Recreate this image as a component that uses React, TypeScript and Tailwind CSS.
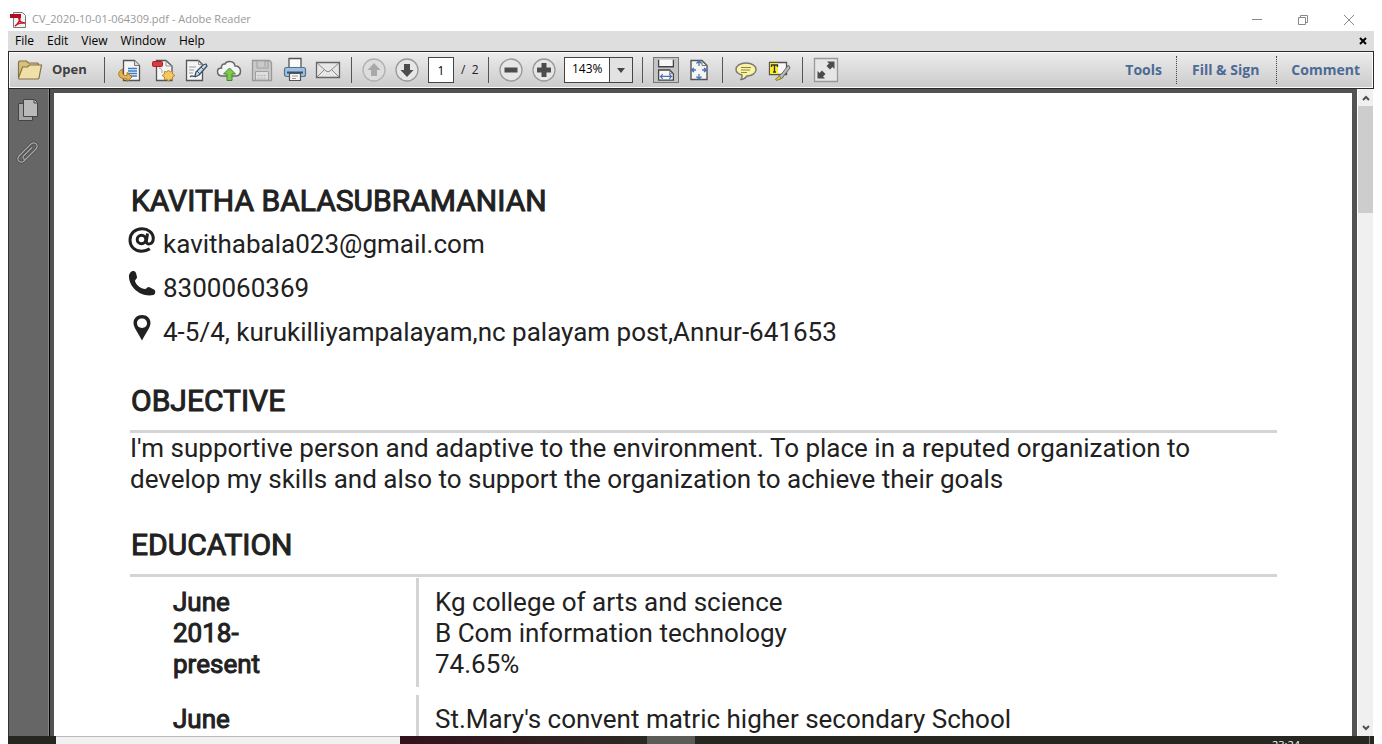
import type { ReactNode } from "react";

const menus = ["File", "Edit", "View", "Window", "Help"];

const education = [
  { period: "June 2018- present", lines: ["Kg college of arts and science", "B Com information technology", "74.65%"] },
  { period: "June", lines: ["St.Mary's convent matric higher secondary School"] },
];

const fold = "M6.5 3.5h11l5 5v15h-16z";

function ToolButton({ label, disabled, children }: { label: string; disabled?: boolean; children: ReactNode }) {
  return (
    <button type="button" aria-label={label} disabled={disabled} className="flex h-8 w-[33px] shrink-0 items-center justify-center">
      <svg viewBox="0 0 26 26" className="size-[26px]" fill="none">
        {children}
      </svg>
    </button>
  );
}

function Separator() {
  return <div className="h-[26px] w-px shrink-0 bg-[#555]" />;
}

function PageShape({ d = fold }: { d?: string }) {
  return (
    <>
      <path d={d} fill="#f5f5f5" stroke="#555" strokeWidth="1.3" />
      <path d="M17.5 3.5v5h5" fill="#ddd" stroke="#777" />
    </>
  );
}

function Toolbar() {
  return (
    <div className="flex h-[38px] shrink-0 items-center border border-[#2a2a2a] bg-linear-to-b from-[#ececec] to-[#cbcbcb] shadow-[inset_0_0_0_1px_#fafafa]">
      <button type="button" className="flex w-[95px] shrink-0 items-center gap-[9px] pl-2 text-[13px] font-bold text-[#404040]">
        <svg viewBox="0 0 26 26" className="size-[26px]" fill="none">
          <path d="M1.500 20.500V5l1-1h7l2 2h9l1 1v3" fill="#d9c079" stroke="#82734a" strokeWidth="1.2" />
          <path d="M1.500 21l4-11h5l2-2h12L22 21l-1 1H2z" fill="#f1dfa8" stroke="#82734a" strokeWidth="1.2" />
        </svg>
        Open
      </button>
      <Separator />
      <div className="flex pr-[7px] pl-2">
        <ToolButton label="Open from Acrobat.com">
          <PageShape />
          <path d="M11 11.500h9M11 14h9M11 16.500h9M13 19h7" stroke="#3e7cc4" strokeWidth="1.3" />
          <path d="M6 12C3 13 1 15.500 2 18.500c.8 2.500 4 3.500 8 3.300V24.500l5-4.500-5-4.500v3c-3.500.3-6-1.500-4-6.500z" fill="#eab546" stroke="#a8742a" />
        </ToolButton>
        <ToolButton label="Create PDF">
          <path d="M6.500 3.500h9.500l6 5.500v14.500H6.500z" fill="#f5f5f5" stroke="#555" strokeWidth="1.3" />
          <path d="M16 3.500V9h6M9 11c3 0 3 3 3 5" stroke="#999" />
          <rect x="2.500" y="4.500" width="10" height="5" rx="1" fill="#dc3a40" stroke="#a81f29" />
          <path d="M18.500 13l1.600 2 2.500-.6-.1 2.600 2.500 1.500-2.500 1.500.1 2.600-2.500-.6-1.600 2.500-1.600-2.500-2.500.6.1-2.600-2.500-1.500 2.500-1.500-.1-2.600 2.500.6z" fill="#f3ca62" stroke="#bd8535" />
        </ToolButton>
        <ToolButton label="Sign document">
          <path d="M3.500 3.500h12l4 4v16h-16z" fill="#f5f5f5" stroke="#555" strokeWidth="1.3" />
          <path d="M15.500 3.500v4h4M6 10h7M6 13h5M6 16h4" stroke="#999" />
          <path d="M7 20c3-3 3 1 5-1l1-4L20 8l3-1 1 2-8 9-4 2" fill="#c4dbed" stroke="#405063" strokeWidth="1.3" strokeLinejoin="round" />
          <path d="M18 10l3 3M14 14l3 3" stroke="#405063" />
        </ToolButton>
        <ToolButton label="Upload">
          <path d="M6.500 19C3 19 1.500 17 1.500 14.500S3.500 11 5.500 11C5 8 7 6.500 9 7c1-3 9-4.500 10 2 3-.2 5.500 1.500 5.500 5s-2 5-5 5z" fill="#f5f5f5" stroke="#666" strokeWidth="1.500" />
          <path d="M13.500 11l6 6h-3.500v6.500h-5V17H7.500z" fill="#80ca4b" stroke="#408b2a" />
        </ToolButton>
        <ToolButton label="Save" disabled>
          <path d="M3.500 3.500h17l2 2v18h-19z" fill="#c9c9c9" stroke="#999" strokeWidth="1.300" />
          <path d="M8 4v7h11V4h-3v5.500" stroke="#a0a0a0" />
          <path d="M6.500 23v-8.500h13V23z" fill="#dedede" stroke="#a0a0a0" />
          <path d="M8.500 18.500h9M8.500 21h9" stroke="#b4b4b4" strokeDasharray="2 1" />
        </ToolButton>
        <ToolButton label="Print">
          <path d="M7 11V1.500h12V11" fill="#fafafa" stroke="#555" strokeWidth="1.300" />
          <rect x="2.500" y="10.500" width="21" height="9" rx="2" fill="#9dc1e0" stroke="#55708c" strokeWidth="1.200" />
          <path d="M5 15.500h16" stroke="#34506c" strokeWidth="2" />
          <path d="M7.500 16.500h11v7h-11z" fill="#f7f7f7" stroke="#555" strokeWidth="1.200" />
          <path d="M10 19h6M10 21.500h4" stroke="#999" />
        </ToolButton>
        <ToolButton label="Email">
          <path d="M1.500 5.500h23v15h-23z" fill="#e6e6e6" stroke="#666" strokeWidth="1.300" />
          <path d="M2 6l9 8q2 1.500 4 0l9-8M2 20l7.500-7.500M24 20l-7.500-7.500" stroke="#888" />
        </ToolButton>
      </div>
      <Separator />
      <div className="flex items-center pr-2 pl-[5px]">
        <ToolButton label="Previous page" disabled>
          <circle cx="13" cy="13" r="11" fill="#ddd" stroke="#b1b1b1" strokeWidth="1.300" />
          <path d="M13 6l6.500 7h-3.500v6h-6v-6H6.500z" fill="#a9a9a9" />
        </ToolButton>
        <ToolButton label="Next page">
          <circle cx="13" cy="13" r="11" fill="#e6e6e6" stroke="#999" strokeWidth="1.300" />
          <path d="M13 20l6.500-7h-3.500V7h-6v6H6.500z" fill="#4c4c4c" />
        </ToolButton>
        <input aria-label="Page number" defaultValue="1" className="ml-[5px] h-[26px] w-[26px] border border-[#444] bg-white text-center text-xs text-black" />
        <span className="w-[26px] pl-[7px] text-xs whitespace-pre text-[#222]">/  2</span>
      </div>
      <Separator />
      <div className="flex items-center pr-[9px] pl-[5px]">
        <ToolButton label="Zoom out">
          <circle cx="13" cy="13" r="11" fill="#e6e6e6" stroke="#999" strokeWidth="1.300" />
          <path d="M6.500 10.500h13v5h-13z" fill="#4c4c4c" />
        </ToolButton>
        <ToolButton label="Zoom in">
          <circle cx="13" cy="13" r="11" fill="#e6e6e6" stroke="#999" strokeWidth="1.300" />
          <path d="M10.500 6h5v4.500H20v5h-4.500V20h-5v-4.500H6v-5h4.500z" fill="#4c4c4c" />
        </ToolButton>
        <div className="relative ml-1 h-[26px] w-[69px] border border-[#444]">
          <select aria-label="Zoom level" className="block h-full w-full appearance-none bg-white pb-0.5 pl-[7px] text-xs text-black">
            <option>143%</option>
          </select>
          <span className="pointer-events-none absolute inset-y-0 right-0 flex w-[23px] items-center justify-center border-l border-[#444] bg-[#e2e2e2]">
            <svg viewBox="0 0 8 5" className="h-[5px] w-2">
              <path d="M0 0h8L4 5z" fill="#444" />
            </svg>
          </span>
        </div>
      </div>
      <Separator />
      <div className="flex items-center pr-[7px] pl-[10px]">
        <button type="button" aria-label="Fit width" aria-pressed="true" className="mr-[3px] flex size-[26px] items-center justify-center border border-[#777] bg-[#c4c4c4]">
          <svg viewBox="0 0 26 26" className="size-6 shrink-0" fill="none">
            <path d="M5 2v7.500h16V2M5 24V13h12l4 4v7z" fill="#f7f7f7" stroke="#444" strokeWidth="1.400" />
            <path d="M17 13v4h4" stroke="#777" />
            <path d="M7 20h12M9.500 17.500L7 20l2.500 2.500M16.500 17.500L19 20l-2.500 2.500" stroke="#4b74b5" strokeWidth="1.300" />
          </svg>
        </button>
        <ToolButton label="Fit page">
          <path d="M5 3.500h11l5 5v14H5z" fill="#f5f5f5" stroke="#555" strokeWidth="1.400" />
          <path d="M16 3.500v5h5" stroke="#777" />
          <path d="M13 4v5m0 8v5M6 13h4m6 0h4M10.500 6.500L13 4l2.500 2.500M10.500 19.500L13 22l2.500-2.500M8 11l-2.500 2L8 15m10-4l2.500 2-2.500 2" stroke="#4b74b5" strokeWidth="1.300" />
        </ToolButton>
      </div>
      <Separator />
      <div className="flex pr-[7px] pl-[6px]">
        <ToolButton label="Add comment">
          <path d="M13 6c6 0 10 3 10 6.500S19 19 14 19c-1.500 2-3.500 3.500-6 3.500 1-1.500 1.500-2.500 1-4.500-3.500-1-6-3-6-5.500C3 9 7 6 13 6z" fill="#fbf3a0" stroke="#777" strokeWidth="1.400" />
          <path d="M8 10.500h10M8 13h9M8 15.500h6" stroke="#8e8550" strokeWidth="1.200" />
        </ToolButton>
        <ToolButton label="Highlight text">
          <path d="M3.500 5.500h17v12h-17z" fill="#f8f8f8" stroke="#555" strokeWidth="1.300" />
          <path d="M4 6h8v11H4z" fill="#fbed28" />
          <path d="M5.500 10V8h6v2M8.500 8v7m-1.500 0h3" stroke="#333" strokeWidth="1.300" />
          <path d="M22.500 8l-7 9-2 1-1 2 2 2 2-1 1-2 6.500-8z" fill="#bbb" stroke="#666" />
          <path d="M13.500 19l-4 3 1 1.500 5-2z" fill="#d6cf35" stroke="#858139" />
        </ToolButton>
      </div>
      <Separator />
      <div className="flex pl-[6px]">
        <ToolButton label="Read mode">
          <path d="M1.500 1.500h23v23h-23z" fill="#e6e6e6" stroke="#999" strokeWidth="1.300" />
          <path d="M14 4.500h7.500V12l-2-2-2.500 2.500-3.500-3.500L16 6.500zM4.500 14l2 2L9 13.500l3.500 3.500L10 19.500l2 2H4.500z" fill="#4c4c4c" />
        </ToolButton>
      </div>
      <nav className="ml-auto flex items-center text-sm font-bold text-[#4c6a94]">
        <button type="button" className="px-[14px]">Tools</button>
        <button type="button" className="h-7 border-l border-dotted border-[#444] pr-[17px] pl-[15px]">Fill &amp; Sign</button>
        <button type="button" className="h-7 border-l border-dotted border-[#444] pr-[13px] pl-[14px]">Comment</button>
      </nav>
    </div>
  );
}

function ContactRow({ icon, children }: { icon: ReactNode; children: ReactNode }) {
  return (
    <div className="flex h-[31px]">
      <svg viewBox="0 0 28 28" className="-mt-0.5 mr-[7px] -ml-0.5 size-7 shrink-0" fill="none">
        {icon}
      </svg>
      <p>{children}</p>
    </div>
  );
}

function SectionTitle({ children }: { children: ReactNode }) {
  return (
    <h2 className="mb-[14px] pl-px text-[30px] leading-[31px] [-webkit-text-stroke:1px_#212121]">{children}</h2>
  );
}

function Resume() {
  return (
    <article className="min-w-0 flex-1 overflow-hidden bg-white pt-[92px] pr-[75px] pl-[76px] font-[Roboto,sans-serif] text-[26px] leading-[31px] text-[#212121]">
      <h1 className="pl-px text-[30px] leading-[31px] [-webkit-text-stroke:1px_#212121]">KAVITHA BALASUBRAMANIAN</h1>
      <div className="mt-[13px] mb-[37px] flex flex-col gap-[13px]">
        <ContactRow
          icon={
            <>
              <circle cx="13.500" cy="12.500" r="4.300" stroke="#212121" strokeWidth="3" />
              <path d="M19.500 6.500l-1.200 8c-.3 3.500 7 4 7-3.500C25 5.500 20 1.800 14 1.800 7 1.800 2 6.500 2 13s4.500 11.200 11.500 11.200c3.200 0 6-.8 8.300-2.400" stroke="#212121" strokeWidth="3" />
            </>
          }
        >
          kavithabala023@gmail.com
        </ContactRow>
        <ContactRow icon={<path d="M2 2C4-1 7-.5 8 2l1 4c.3 2-2 2.500-2 4 1 4 6 8 10 8 1.500 0 2-2 4-2l5 2.500c2 1.500 1.500 4-.5 5.500C12 27 0 15 1 4z" fill="#212121" />}>
          8300060369
        </ContactRow>
        <ContactRow icon={<path fillRule="evenodd" d="M14 0c5 0 8.500 3.500 8.500 8 0 4.500-5 10.500-8.500 17.500C10.500 18.500 5.500 12.500 5.500 8c0-4.500 3.500-8 8.500-8zm0 3.500c-3 0-5 2-5 4.800s2 4.700 5 4.700 5-2 5-4.700-2-4.800-5-4.800z" fill="#212121" />}>
          4-5/4, kurukilliyampalayam,nc palayam post,Annur-641653
        </ContactRow>
      </div>
      <section>
        <SectionTitle>OBJECTIVE</SectionTitle>
        <p className="mb-[34px] border-t-3 border-[#d4d4d4]">
          I'm supportive person and adaptive to the environment. To place in a reputed organization to develop my skills and also to support the organization to achieve their goals
        </p>
      </section>
      <section>
        <SectionTitle>EDUCATION</SectionTitle>
        <div className="flex flex-col gap-2 border-t-3 border-[#d4d4d4] pt-px">
          {education.map((item) => (
            <div key={item.period} className="flex">
              <p className="w-[286px] shrink-0 pt-[9px] pr-[140px] pb-[7px] pl-[43px] [-webkit-text-stroke:1px_#212121]">{item.period}</p>
              <div className="flex-1 border-l-3 border-[#d4d4d4] pt-[9px] pb-[7px] pl-4">
                {item.lines.map((line) => (
                  <p key={line}>{line}</p>
                ))}
              </div>
            </div>
          ))}
        </div>
      </section>
    </article>
  );
}

export default function App() {
  return (
    <div className="flex h-screen flex-col overflow-hidden bg-white px-2 font-['Open_Sans','Noto_Sans',sans-serif]">
      <header className="flex h-[31px] shrink-0 items-center pt-2 text-[11px] text-[#999]">
        <svg viewBox="0 0 18 18" className="mr-1 ml-[2px] size-[18px]" fill="none">
          <path d="M3.500 1.500h9l3 3v12h-12z" fill="#f4f4f4" stroke="#777" />
          <path d="M0 3h11v4H0z" fill="#b30f1b" />
          <path d="M5 15c2-1 5-5 5-8 0-1.500-2-1-1 1 1 3 3 4 6 4-3-1-8 1-10 3z" stroke="#c31622" strokeWidth="1.400" />
        </svg>
        <span>CV_2020-10-01-064309.pdf - Adobe Reader</span>
        <div className="ml-auto flex text-[#888]">
          <button type="button" aria-label="Minimize" className="flex w-[46px] justify-center">
            <svg viewBox="0 0 12 12" className="size-3"><path d="M1 5.500h10" stroke="currentColor" /></svg>
          </button>
          <button type="button" aria-label="Restore" className="flex w-[46px] justify-center">
            <svg viewBox="0 0 12 12" className="size-3" fill="none"><path d="M1.500 3.500h7v7h-7zM3.500 3.500v-2h7v7h-2" stroke="currentColor" /></svg>
          </button>
          <button type="button" aria-label="Close" className="mr-[2px] flex w-[46px] justify-center">
            <svg viewBox="0 0 12 12" className="size-3"><path d="M1 1l10 10M11 1L1 11" stroke="currentColor" /></svg>
          </button>
        </div>
      </header>
      <div className="flex h-5 shrink-0 items-center gap-[13px] bg-[#dedede] px-[7px] text-xs text-black">
        {menus.map((menu) => (
          <button key={menu} type="button">{menu}</button>
        ))}
        <button type="button" aria-label="Close document" className="ml-auto">
          <svg viewBox="0 0 8 8" className="size-2"><path d="M1 1l6 6M7 1L1 7" stroke="#000" strokeWidth="2" /></svg>
        </button>
      </div>
      <Toolbar />
      <main className="flex min-h-0 flex-1 bg-[#525252]">
        <aside className="flex w-[42px] shrink-0 flex-col items-center gap-[17px] border-r border-l border-r-black border-l-[#333] bg-[#666] pt-2 pr-[3px] shadow-[inset_-1px_0_0_#888]">
          <button type="button" aria-label="Page thumbnails">
            <svg viewBox="0 0 26 26" className="size-[26px]" fill="none">
              <path d="M3.500 6.500h14v17h-14z" fill="#a6a6a6" stroke="#444" />
              <path d="M8.500 2.500h11l3 3v14h-14z" fill="#bababa" stroke="#444" />
              <path d="M19 2.500v3.500h3.500" stroke="#444" />
            </svg>
          </button>
          <button type="button" aria-label="Attachments">
            <svg viewBox="0 0 26 26" className="size-[26px]" fill="none" strokeLinecap="round">
              <path d="M17 13l-8 8c-4 3-8-1-5-5L16 4c4-3 8 1 5 5L11 19c-2 1-4-1-2.500-3L17 7.500" stroke="#424242" strokeWidth="2.600" />
              <path d="M17 13l-8 8c-4 3-8-1-5-5L16 4c4-3 8 1 5 5L11 19c-2 1-4-1-2.500-3L17 7.500" stroke="#aaa" strokeWidth="1.300" />
            </svg>
          </button>
        </aside>
        <div className="flex min-w-0 flex-1 pt-1 pr-[5px] pl-1">
          <Resume />
        </div>
        <div className="flex w-[17px] shrink-0 flex-col items-center border-x border-white bg-[#f0f0f0]">
          <button type="button" aria-label="Scroll up" className="flex h-[17px] items-center">
            <svg viewBox="0 0 8 6" className="h-[6px] w-2" fill="none"><path d="M1 5l3-3 3 3" stroke="#505050" strokeWidth="2" /></svg>
          </button>
          <div className="h-[107px] w-full bg-[#cdcdcd]" />
          <button type="button" aria-label="Scroll down" className="mt-auto flex h-[17px] items-center">
            <svg viewBox="0 0 8 6" className="h-[6px] w-2" fill="none"><path d="M1 1l3 3 3-3" stroke="#505050" strokeWidth="2" /></svg>
          </button>
        </div>
      </main>
      <footer className="flex h-2 shrink-0 overflow-hidden bg-[#272722]">
        <div className="w-12 shrink-0" />
        <div className="w-[344px] shrink-0 border-t border-[#bbb] bg-[#f1f1f1]" />
        <div className="w-[247px] shrink-0 bg-linear-to-r from-[#32121d] to-[#2b2924]" />
        <div className="w-12 shrink-0 bg-[#5b5b57]" />
        <time className="mr-1 ml-auto w-[101px] border-r border-[#777] pt-[3px] pl-[3px] text-[11px] leading-3 text-white">23:24</time>
      </footer>
    </div>
  );
}
